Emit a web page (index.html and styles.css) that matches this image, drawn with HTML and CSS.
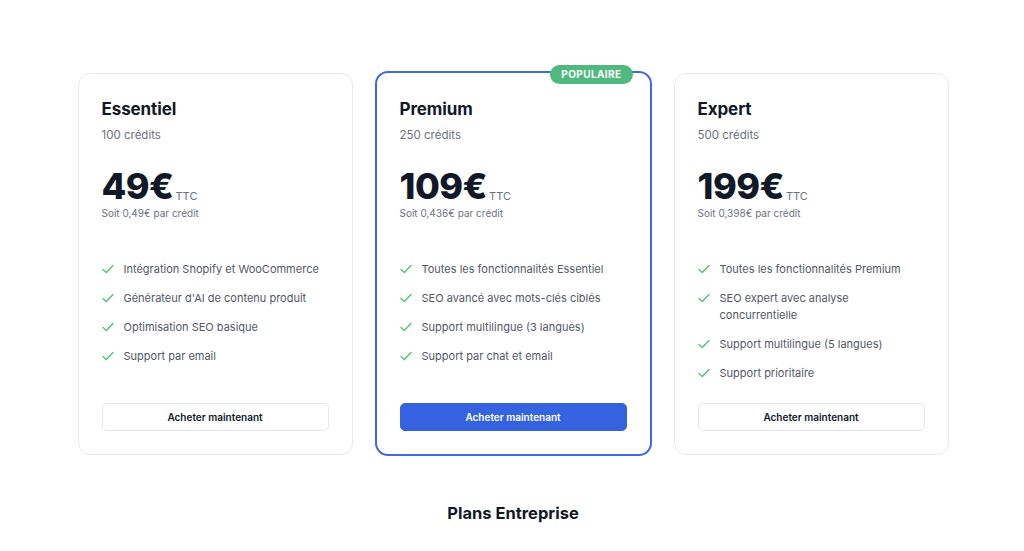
FILE: index.html
```html
<!DOCTYPE html>
<html lang="fr">
<head>
<meta charset="utf-8">
<title>Tarifs</title>
<link rel="stylesheet" href="styles.css">
</head>
<body>
<main class="page">
  <section class="plans">
    <article class="card">
      <h2 class="title">Essentiel</h2>
      <p class="credits">100 crédits</p>
      <div class="price"><span class="amount">49€</span><span class="ttc">TTC</span></div>
      <p class="unit">Soit 0,49€ par crédit</p>
      <ul class="features">
        <li><svg class="check" viewBox="0 0 12 10"><polyline points="1,5.5 4.3,8.5 11,1.5"/></svg><span>Intégration Shopify et WooCommerce</span></li>
        <li><svg class="check" viewBox="0 0 12 10"><polyline points="1,5.5 4.3,8.5 11,1.5"/></svg><span>Générateur d'AI de contenu produit</span></li>
        <li><svg class="check" viewBox="0 0 12 10"><polyline points="1,5.5 4.3,8.5 11,1.5"/></svg><span>Optimisation SEO basique</span></li>
        <li><svg class="check" viewBox="0 0 12 10"><polyline points="1,5.5 4.3,8.5 11,1.5"/></svg><span>Support par email</span></li>
      </ul>
      <button class="btn">Acheter maintenant</button>
    </article>
    <article class="card card-featured">
      <span class="badge">POPULAIRE</span>
      <h2 class="title">Premium</h2>
      <p class="credits">250 crédits</p>
      <div class="price"><span class="amount">109€</span><span class="ttc">TTC</span></div>
      <p class="unit">Soit 0,436€ par crédit</p>
      <ul class="features">
        <li><svg class="check" viewBox="0 0 12 10"><polyline points="1,5.5 4.3,8.5 11,1.5"/></svg><span>Toutes les fonctionnalités Essentiel</span></li>
        <li><svg class="check" viewBox="0 0 12 10"><polyline points="1,5.5 4.3,8.5 11,1.5"/></svg><span>SEO avancé avec mots-clés ciblés</span></li>
        <li><svg class="check" viewBox="0 0 12 10"><polyline points="1,5.5 4.3,8.5 11,1.5"/></svg><span>Support multilingue (3 langues)</span></li>
        <li><svg class="check" viewBox="0 0 12 10"><polyline points="1,5.5 4.3,8.5 11,1.5"/></svg><span>Support par chat et email</span></li>
      </ul>
      <button class="btn btn-primary">Acheter maintenant</button>
    </article>
    <article class="card">
      <h2 class="title">Expert</h2>
      <p class="credits">500 crédits</p>
      <div class="price"><span class="amount">199€</span><span class="ttc">TTC</span></div>
      <p class="unit">Soit 0,398€ par crédit</p>
      <ul class="features">
        <li><svg class="check" viewBox="0 0 12 10"><polyline points="1,5.5 4.3,8.5 11,1.5"/></svg><span>Toutes les fonctionnalités Premium</span></li>
        <li><svg class="check" viewBox="0 0 12 10"><polyline points="1,5.5 4.3,8.5 11,1.5"/></svg><span>SEO expert avec analyse concurrentielle</span></li>
        <li><svg class="check" viewBox="0 0 12 10"><polyline points="1,5.5 4.3,8.5 11,1.5"/></svg><span>Support multilingue (5 langues)</span></li>
        <li><svg class="check" viewBox="0 0 12 10"><polyline points="1,5.5 4.3,8.5 11,1.5"/></svg><span>Support prioritaire</span></li>
      </ul>
      <button class="btn">Acheter maintenant</button>
    </article>
  </section>
  <h2 class="enterprise">Plans Entreprise</h2>
</main>
</body>
</html>
```

FILE: styles.css
```css
* { box-sizing: border-box; }
html, body { margin: 0; padding: 0; background: #fff; }
body {
  font-family: Inter, "Noto Sans", sans-serif;
  color: #111827;
  -webkit-font-smoothing: antialiased;
}
.page {
  width: 871px;
  margin: 0 auto;
  padding-top: 73px;
  position: relative;
  left: 1px;
}
.plans {
  display: grid;
  grid-template-columns: repeat(3, 275px);
  column-gap: 23px;
}
.card {
  position: relative;
  display: flex;
  flex-direction: column;
  border: 1px solid #e8e9ec;
  border-radius: 12px;
  padding: 23px 23px 23px 23px;
  background: #fff;
  height: 382px;
}
.card-featured {
  border: 2px solid #3f68e6;
  margin: -2px -1px -1px -1px;
  height: 385px;
  padding: 24px 23px 23px 23px;
  border-radius: 13px;
}
.badge {
  position: absolute;
  top: -8px;
  right: 17px;
  background: #50b97f;
  color: #fff;
  font-size: 10px;
  font-weight: 700;
  letter-spacing: 0.4px;
  height: 19px;
  line-height: 19px;
  padding: 0 11px;
  border-radius: 10px;
}
.title {
  margin: 0;
  font-size: 17px;
  font-weight: 700;
  line-height: 24px;
  letter-spacing: -0.1px;
}
.credits {
  margin: 6px 0 0;
  font-size: 11.5px;
  line-height: 16px;
  color: #6b7280;
}
.price {
  margin-top: 23px;
  display: flex;
  align-items: baseline;
  gap: 2px;
  height: 40px;
}
.amount {
  font-size: 36px;
  font-weight: 800;
  letter-spacing: -0.5px;
  line-height: 40px;
}
.ttc {
  font-size: 11px;
  color: #6b7280;
  position: relative;
  top: 1px;
}
.unit {
  margin: 0;
  font-size: 10px;
  line-height: 14px;
  color: #6b7280;
}
.features {
  list-style: none;
  margin: 41px 0 0;
  padding: 0;
  display: flex;
  flex-direction: column;
  gap: 12px;
}
.features li {
  display: flex;
  align-items: flex-start;
  gap: 10px;
  font-size: 11px;
  line-height: 17px;
  color: #525866;
}
.check {
  flex: none;
  width: 12px;
  height: 10px;
  margin-top: 3px;
  fill: none;
  stroke: #4cc46b;
  stroke-width: 1.3;
  stroke-linecap: round;
  stroke-linejoin: round;
}
.btn {
  margin-top: auto;
  width: 100%;
  height: 28px;
  border: 1px solid #e5e7eb;
  border-radius: 5px;
  background: #fff;
  font-family: inherit;
  font-size: 10px;
  font-weight: 600;
  color: #111827;
}
.btn-primary {
  background: #3563e0;
  border-color: #3563e0;
  color: #fff;
}
.enterprise {
  margin: 46px 0 0;
  text-align: center;
  font-size: 16.5px;
  font-weight: 700;
  line-height: 24px;
}
```
